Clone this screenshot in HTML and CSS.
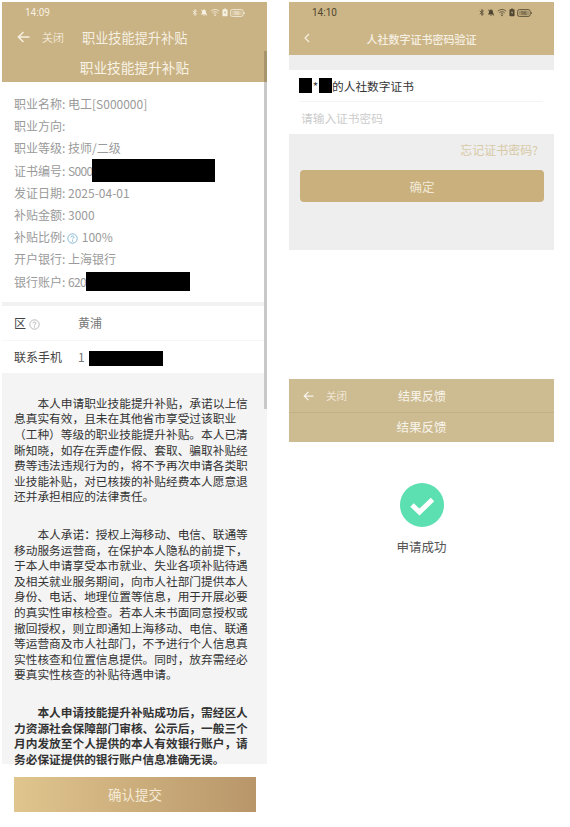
FILE: index.html
```html
<!DOCTYPE html>
<html lang="zh-CN">
  <head>
    <meta charset="UTF-8" />
    <title>职业技能提升补贴</title>
    <link rel="stylesheet" href="styles.css">
  </head>
  <body>
    <svg class="sprites" aria-hidden="true">
      <symbol id="i-bt" viewBox="0 0 8 10"><path d="M1 2.8 6 7 3.8 9V1L6 3 1 7.2" fill="none" stroke="currentColor" stroke-width="1.1"/></symbol>
      <symbol id="i-bell" viewBox="0 0 10 10"><path d="M5 1.2C3.2 1.2 2.6 2.6 2.6 4.2 2.6 5.8 1.6 6.6 1.4 7.4H8.6C8.4 6.6 7.4 5.8 7.4 4.2 7.4 2.6 6.8 1.2 5 1.2ZM4 8.2H6L5 9.4Z" fill="currentColor"/><path d="M1.2 1.4 9 9" stroke="currentColor" stroke-width="1"/></symbol>
      <symbol id="i-wifi" viewBox="0 0 12 10"><path d="M1 3.4C4 .8 8 .8 11 3.4M2.8 5.3C4.8 3.7 7.2 3.7 9.2 5.3M4.5 7C5.4 6.3 6.6 6.3 7.5 7" fill="none" stroke="currentColor" stroke-width="1"/><circle cx="6" cy="8.6" r=".9" fill="currentColor"/></symbol>
      <symbol id="i-saver" viewBox="0 0 8 11"><path d="M1.6 1H3V.2H5V1H6.4C7 1 7.4 1.4 7.4 2V9.6C7.4 10.2 7 10.6 6.4 10.6H1.6C1 10.6.6 10.2.6 9.6V2C.6 1.4 1 1 1.6 1Z" fill="currentColor"/><path d="M4.4 2.6 2.8 6H4L3.6 8.6 5.4 5H4.2Z" fill="#c9b283"/></symbol>
      <symbol id="i-batt" viewBox="0 0 17 9"><rect x=".5" y=".5" width="14.5" height="8" rx="2.4" fill="none" stroke="currentColor" stroke-width=".9"/><rect x="1.6" y="1.6" width="12" height="5.8" rx="1.5" fill="currentColor" opacity=".3"/><path d="M15.8 3v3c.7-.2 1-.8 1-1.5S16.5 3.2 15.8 3Z" fill="currentColor"/><text x="7.6" y="6.6" text-anchor="middle" font-size="5.5" fill="currentColor">96</text></symbol>
      <symbol id="i-back" viewBox="0 0 13 12"><path d="M12.5 6H1.5M6.4 1 1.4 6l5 5" fill="none" stroke="currentColor" stroke-width="1.5"/></symbol>
      <symbol id="i-help" viewBox="0 0 11 11"><circle cx="5.5" cy="5.5" r="4.7" fill="none" stroke="currentColor" stroke-width=".8"/><path d="M3.9 4.3C4 3.4 4.6 3 5.5 3 6.4 3 7 3.5 7 4.2 7 5.2 5.5 5.2 5.5 6.4" fill="none" stroke="currentColor" stroke-width=".8"/><circle cx="5.5" cy="7.9" r=".55" fill="currentColor"/></symbol>
    </svg>

    <div class="page">
      <!-- 左侧：申请页 -->
      <main class="panel panel-apply">
        <div class="scrollbar"></div>
        <header class="head">
          <div class="status">
            <span class="time">14:09</span>
            <span class="status-icons">
              <svg class="ic-bt"><use href="#i-bt"/></svg>
              <svg class="ic-bell"><use href="#i-bell"/></svg>
              <svg class="ic-wifi"><use href="#i-wifi"/></svg>
              <svg class="ic-saver"><use href="#i-saver"/></svg>
              <svg class="ic-batt"><use href="#i-batt"/></svg>
            </span>
          </div>
          <div class="nav">
            <svg class="back"><use href="#i-back"/></svg>
            <span class="close">关闭</span>
            <span class="nav-title">职业技能提升补贴</span>
          </div>
        </header>
        <div class="subhead">职业技能提升补贴</div>

        <section class="info">
          <div>职业名称: 电工[S000000]</div>
          <div>职业方向:</div>
          <div>职业等级: 技师/二级</div>
          <div>证书编号: <span class="num">S000</span><span class="mask mask-cert"></span></div>
          <div>发证日期: 2025-04-01</div>
          <div>补贴金额: 3000</div>
          <div>补贴比例: <svg class="help help-blue"><use href="#i-help"/></svg> 100%</div>
          <div>开户银行: 上海银行</div>
          <div>银行账户: <span class="num">620</span><span class="mask mask-bank"></span></div>
        </section>

        <section class="fields">
          <div class="field">
            <span class="field-label">区 <svg class="help"><use href="#i-help"/></svg></span>
            <span>黄浦</span>
          </div>
          <div class="field">
            <span class="field-label">联系手机</span>
            <span>1<span class="mask mask-phone"></span></span>
          </div>
        </section>

        <section class="terms">
          <p>本人申请职业技能提升补贴，承诺以上信息真实有效，且未在其他省市享受过该职业（工种）等级的职业技能提升补贴。本人已清晰知晓，如存在弄虚作假、套取、骗取补贴经费等违法违规行为的，将不予再次申请各类职业技能补贴，对已核拨的补贴经费本人愿意退还并承担相应的法律责任。</p>
          <p>本人承诺：授权上海移动、电信、联通等移动服务运营商，在保护本人隐私的前提下，于本人申请享受本市就业、失业各项补贴待遇及相关就业服务期间，向市人社部门提供本人身份、电话、地理位置等信息，用于开展必要的真实性审核检查。若本人未书面同意授权或撤回授权，则立即通知上海移动、电信、联通等运营商及市人社部门，不予进行个人信息真实性核查和位置信息提供。同时，放弃需经必要真实性核查的补贴待遇申请。</p>
          <p class="strong">本人申请技能提升补贴成功后，需经区人力资源社会保障部门审核、公示后，一般三个月内发放至个人提供的本人有效银行账户，请务必保证提供的银行账户信息准确无误。</p>
        </section>

        <footer class="submit-bar">
          <button class="submit">确认提交</button>
        </footer>
      </main>

      <div class="right">
        <!-- 右上：证书密码验证 -->
        <section class="panel panel-verify">
          <header class="head head-verify">
            <div class="status status-dark">
              <span class="time">14:10</span>
              <span class="status-icons">
                <svg class="ic-bt"><use href="#i-bt"/></svg>
                <svg class="ic-bell"><use href="#i-bell"/></svg>
                <svg class="ic-wifi"><use href="#i-wifi"/></svg>
                <svg class="ic-saver"><use href="#i-saver"/></svg>
                <svg class="ic-batt"><use href="#i-batt"/></svg>
              </span>
            </div>
            <div class="nav nav-center">
              <svg class="chevron" viewBox="0 0 6 10"><path d="M5 1 1 5l4 4" fill="none" stroke="currentColor" stroke-width="1.2"/></svg>
              <span class="nav-title-bold">人社数字证书密码验证</span>
            </div>
          </header>
          <div class="form-card">
            <div class="cert-row"><span class="mask mask-name"></span><span class="star">*</span><span class="mask mask-name"></span>的人社数字证书</div>
            <div class="pwd-row">请输入证书密码</div>
          </div>
          <div class="forgot">忘记证书密码?</div>
          <button class="confirm">确定</button>
        </section>

        <!-- 右下：结果反馈 -->
        <section class="panel-result">
          <div class="result-nav">
            <svg class="back"><use href="#i-back"/></svg>
            <span class="close">关闭</span>
            <span class="result-title">结果反馈</span>
          </div>
          <div class="result-sub">结果反馈</div>
          <svg class="ok" viewBox="0 0 44 44">
            <circle cx="22" cy="22" r="22" fill="#5de0b1"/>
            <path d="M12 22 19.5 29 32.5 16.5" fill="none" stroke="#fff" stroke-width="5"/>
          </svg>
          <div class="result-text">申请成功</div>
        </section>
      </div>
    </div>
  </body>
</html>
```

FILE: styles.css
```css
/* 页面整体 */
body {
  margin: 0;
  width: 570px;
  height: 827px;
  overflow: hidden;
  background: #fff;
  font-family: "Noto Sans CJK SC", "Liberation Sans", sans-serif;
}
.sprites {
  display: none;
}
.page {
  display: flex;
  padding: 2px 0 0 2px;
  gap: 22px;
}
.panel {
  position: relative;
  width: 265px;
}
.right {
  width: 265px;
}

/* 顶部 */
.head {
  background: #c9b283;
  color: #f6f0e2;
}
.status {
  height: 21px;
  padding: 0 22px 0 23px;
  display: flex;
  align-items: center;
  justify-content: space-between;
  font-family: Roboto, sans-serif;
  font-size: 10px;
}
.status-dark {
  color: #4f4631;
}
.status-icons {
  display: flex;
  align-items: center;
  gap: 2px;
}
.ic-bt {
  width: 6px;
  height: 9px;
}
.ic-bell {
  width: 8px;
  height: 9px;
}
.ic-wifi {
  width: 10px;
  height: 9px;
}
.ic-saver {
  width: 6px;
  height: 9px;
}
.ic-batt {
  width: 15px;
  height: 8px;
}
.nav {
  height: 28px;
  display: flex;
  align-items: center;
  padding-left: 15px;
  font-size: 13.2px;
}
.back {
  width: 13px;
  height: 12px;
}
.close {
  margin-left: 12px;
  font-size: 11px;
  color: #efe6d2;
}
.nav-title {
  margin-left: 18px;
}
.subhead {
  height: 31px;
  line-height: 33px;
  background: #c9b283;
  color: #f8f3e6;
  font-size: 13.7px;
  text-align: center;
}
.scrollbar {
  position: absolute;
  top: 49px;
  right: 0;
  width: 3px;
  height: 358px;
  background: linear-gradient(#a8956c 31px, #c8c8c8 31px);
}

/* 证书信息 */
.info {
  padding: 11px 12px 9px;
  font-size: 12px;
  line-height: 22.2px;
  color: #9a9a9a;
  white-space: nowrap;
}
.num {
  letter-spacing: -0.7px;
}
.mask {
  display: inline-block;
  background: #000;
  vertical-align: middle;
}
.mask-cert {
  width: 123px;
  height: 23px;
  margin-top: -4px;
}
.mask-bank {
  width: 104px;
  height: 19px;
  margin-top: -3px;
}
.mask-phone {
  width: 74px;
  height: 15px;
  margin-left: 4px;
}
.mask-name {
  width: 13px;
  height: 15px;
}
.help {
  width: 11px;
  height: 11px;
  color: #aaa;
  vertical-align: -2px;
}
.help-blue {
  color: #6aa6c9;
  margin: 0 1px 0 -1px;
}

.fields {
  border-top: 4px solid #f2f2f2;
  font-size: 12px;
  color: #777;
}
.field {
  height: 34px;
  display: flex;
  align-items: center;
  padding-left: 12px;
}
.field + .field {
  height: 32px;
  border-top: 1px solid #f7f7f7;
}
.field-label {
  width: 64px;
  color: #444;
}

/* 承诺书 */
.terms {
  height: 391px;
  box-sizing: border-box;
  padding: 22px 15px 0 12px;
  background: #f4f4f4;
  font-size: 11.7px;
  line-height: 15.6px;
  color: #333;
}
.terms p {
  margin: 0 0 22px;
  text-indent: 2em;
}
.terms .strong {
  margin-bottom: 0;
  font-weight: 700;
}
.submit-bar {
  padding: 13px 11px 0 12px;
}
.submit {
  display: block;
  width: 242px;
  height: 35px;
  padding: 0;
  border: 0;
  background: linear-gradient(90deg, #e0c58e, #b8966a);
  color: #f4ead6;
  font-family: inherit;
  font-size: 13.5px;
}

/* 密码验证 */
.panel-verify {
  height: 248px;
  background: #eeeeee;
}
.head-verify {
  height: 53px;
  background: #ccb687;
}
.nav-center {
  position: relative;
  justify-content: center;
  height: 32px;
  padding: 0;
}
.chevron {
  position: absolute;
  left: 15px;
  top: 10px;
  width: 6px;
  height: 10px;
}
.nav-title-bold {
  font-size: 11px;
  font-weight: 500;
}
.form-card {
  margin-top: 15px;
  padding: 0 11px 0 10px;
  background: #fff;
  font-size: 11.7px;
}
.cert-row {
  height: 31px;
  display: flex;
  align-items: center;
  border-bottom: 1px solid #f4f4f4;
  color: #333;
}
.star {
  width: 7px;
  text-align: center;
}
.pwd-row {
  height: 31px;
  padding: 0 0 1px 2px;
  display: flex;
  align-items: center;
  color: #cccccc;
}
.forgot {
  margin-top: 7px;
  padding-right: 16px;
  font-size: 12px;
  line-height: 17px;
  text-align: right;
  color: #d8c9a6;
}
.confirm {
  display: block;
  width: 244px;
  height: 32px;
  margin: 12px 0 0 11px;
  padding: 0;
  border: 0;
  border-radius: 4px;
  background: #c9b07c;
  color: #f1e9d7;
  font-family: inherit;
  font-size: 12.5px;
}

/* 结果反馈 */
.panel-result {
  margin-top: 129px;
  text-align: center;
}
.result-nav {
  position: relative;
  height: 34px;
  display: flex;
  align-items: center;
  padding-left: 14px;
  background: #cdbb92;
  border-bottom: 1px solid #c3b086;
  box-sizing: border-box;
  color: #f8f4ea;
}
.result-nav .back {
  width: 11px;
  height: 10px;
}
.result-nav .close {
  font-size: 10.5px;
}
.result-title {
  position: absolute;
  left: 109px;
  font-size: 12px;
}
.result-sub {
  height: 29px;
  line-height: 28px;
  background: #cdbb92;
  color: #f8f4ea;
  font-size: 12.5px;
}
.ok {
  display: block;
  width: 44px;
  height: 44px;
  margin: 41px auto 0;
}
.result-text {
  margin-top: 11px;
  font-size: 12.5px;
  line-height: 18px;
  color: #555;
}
```
